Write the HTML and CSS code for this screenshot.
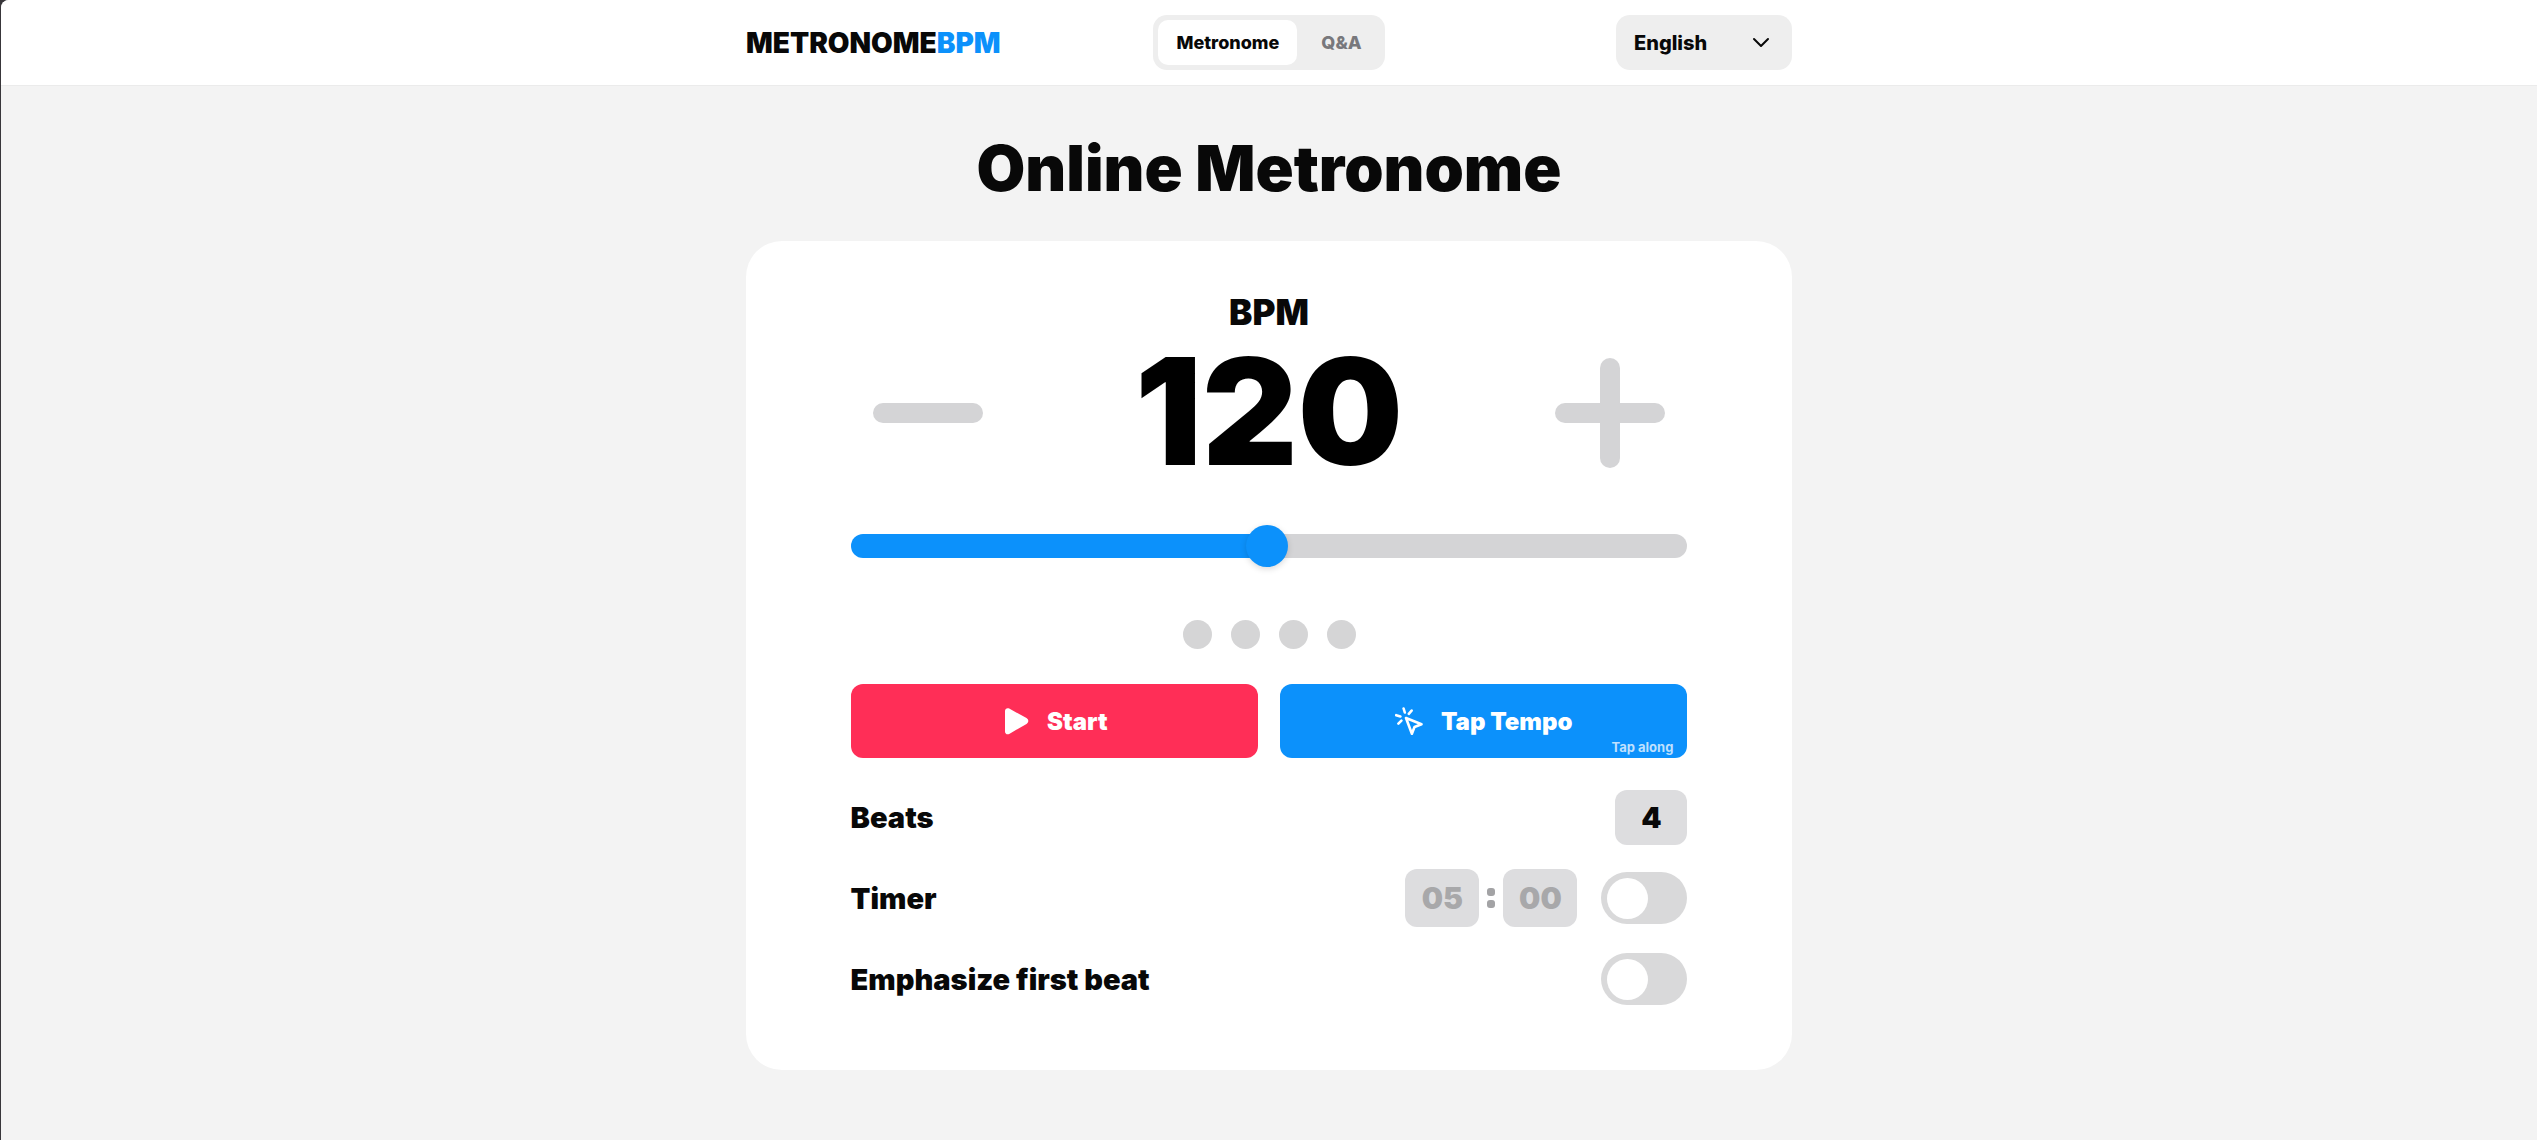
FILE: index.html
```html
<!DOCTYPE html>
<html lang="en">
<head>
<meta charset="utf-8">
<meta name="viewport" content="width=device-width, initial-scale=1">
<title>Online Metronome</title>
<link rel="stylesheet" href="styles.css">
</head>
<body>
<div class="page">
  <header class="header">
    <div class="header-inner">
      <a class="logo" href="#">METRONOME<span class="logo-accent">BPM</span></a>
      <nav class="tabs">
        <a class="tab tab-active" href="#metronome" aria-current="page">Metronome</a>
        <a class="tab" href="#qa">Q&amp;A</a>
      </nav>
      <div class="language">
        <select class="language-select" aria-label="Language"><option>English</option></select>
        <svg class="language-arrow" viewBox="0 0 18 12" aria-hidden="true"><path d="M2 2l7 7 7-7" fill="none" stroke="currentColor" stroke-width="2" stroke-linecap="round" stroke-linejoin="round"/></svg>
      </div>
    </div>
  </header>
  <main class="main">
    <h1 class="title">Online Metronome</h1>
    <section class="card">
      <label class="bpm-label" for="bpm">BPM</label>
      <div class="bpm-row">
        <button class="step" type="button" aria-label="Decrease tempo">
          <svg class="step-icon" viewBox="0 0 110 110"><rect y="45" width="110" height="20" rx="10"/></svg>
        </button>
        <input class="bpm-value" id="bpm" type="text" inputmode="numeric" value="120">
        <button class="step" type="button" aria-label="Increase tempo">
          <svg class="step-icon" viewBox="0 0 110 110"><rect y="45" width="110" height="20" rx="10"/><rect x="45" width="20" height="110" rx="10"/></svg>
        </button>
      </div>
      <input class="slider" type="range" min="1" max="240" value="120" aria-label="Tempo">
      <div class="dots"><span class="dot"></span><span class="dot"></span><span class="dot"></span><span class="dot"></span></div>
      <div class="actions">
        <button class="action action-start" type="button">
          <svg class="action-icon" viewBox="0 0 28 28" aria-hidden="true"><path d="M4 4v20.500c0 2.200 2.200 3.600 4.200 2.400l17.300-10c2.400-1.600 2.400-4.200 0-5.800L8.200 1.600C6.200.4 4 1.800 4 4z" fill="currentColor"/></svg>
          Start
        </button>
        <button class="action action-tap" type="button">
          <svg class="action-icon" viewBox="0 0 28 28" aria-hidden="true"><path d="M11 11l15.500 6.200-7 2.800-2.600 6.800zM8.600 1.500l1.200 4M1.200 8.200l4.200 1.200M16.600 3.600l-2.800 3.200M6.400 13.600l-3 3" fill="none" stroke="currentColor" stroke-width="2.600" stroke-linecap="round" stroke-linejoin="round"/></svg>
          Tap Tempo
          <span class="action-hint">Tap along</span>
        </button>
      </div>
      <div class="settings">
        <div class="setting">
          <label for="beats">Beats</label>
          <input class="field field-beats" id="beats" type="text" inputmode="numeric" value="4">
        </div>
        <div class="setting">
          <label for="timer">Timer</label>
          <div class="setting-controls">
            <div class="timer">
              <input class="field field-time" type="text" value="05" aria-label="Minutes" disabled>
              <span class="colon"></span>
              <input class="field field-time" type="text" value="00" aria-label="Seconds" disabled>
            </div>
            <input class="toggle" id="timer" type="checkbox" role="switch">
          </div>
        </div>
        <div class="setting">
          <label for="emphasize">Emphasize first beat</label>
          <input class="toggle" id="emphasize" type="checkbox" role="switch">
        </div>
      </div>
    </section>
  </main>
</div>
</body>
</html>
```
FILE: styles.css
```css
* { box-sizing: border-box; }

body {
  margin: 0;
  background: #38363a;
  color: #080808;
  font-family: Inter, "Noto Sans", sans-serif;
  font-weight: 900;
}

button, input, select {
  margin: 0;
  border: 0;
  padding: 0;
  color: inherit;
  font: inherit;
}

button { cursor: pointer; }

.page {
  min-height: 100vh;
  margin-left: 1px;
  border-top-left-radius: 8px;
  background: #f3f3f3;
  overflow: hidden;
}

.header {
  border-bottom: 1px solid #ebebeb;
  background: #fff;
}

.header-inner {
  display: grid;
  grid-template-columns: 1fr auto 1fr;
  align-items: center;
  max-width: 1046px;
  margin: 0 auto;
  padding: 15px 0;
}

.logo {
  color: inherit;
  font-size: 28px;
  text-decoration: none;
}

.logo-accent { color: #0c91fb; }

.tabs {
  display: flex;
  gap: 6px;
  padding: 5px;
  border-radius: 14px;
  background: #eee;
}

.tab {
  padding: 0 18px;
  border-radius: 10px;
  color: #78787c;
  font-size: 18px;
  font-weight: 800;
  line-height: 45px;
  text-decoration: none;
}

.tab-active {
  background: #fff;
  color: #080808;
}

.language {
  position: relative;
  justify-self: end;
  width: 176px;
}

.language-select {
  width: 100%;
  height: 55px;
  padding: 0 18px;
  border-radius: 14px;
  background: #eee;
  font-size: 20px;
  font-weight: 800;
  appearance: none;
}

.language-arrow {
  position: absolute;
  top: 22px;
  right: 22px;
  width: 18px;
  height: 12px;
  pointer-events: none;
}

.main {
  max-width: 1046px;
  margin: 0 auto;
  padding: 42px 0 69px;
}

.title {
  margin: 0 0 33px;
  font-size: 63px;
  font-weight: 900;
  line-height: 80px;
  text-align: center;
}

.card {
  display: flex;
  flex-direction: column;
  padding: 46px 10% 62px;
  border-radius: 36px;
  background: #fff;
}

.bpm-label {
  align-self: center;
  font-size: 35px;
  line-height: 50px;
}

.bpm-row {
  display: flex;
  align-items: center;
  justify-content: space-between;
  height: 152px;
  padding: 0 22px;
}

.step {
  width: 110px;
  height: 110px;
  background: none;
}

.step-icon {
  display: block;
  fill: #d4d4d6;
}

.bpm-value {
  width: 360px;
  height: 148px;
  margin-bottom: 4px;
  background: none;
  color: #000;
  font-size: 148px;
  text-align: center;
}

.slider {
  width: 100%;
  height: 24px;
  margin-top: 45px;
  border-radius: 12px;
  background: linear-gradient(to right, #0c91fb 50%, #d4d4d6 50%);
  appearance: none;
}

.slider::-webkit-slider-thumb {
  width: 42px;
  height: 42px;
  border-radius: 50%;
  background: #0c91fb;
  box-shadow: 0 2px 6px rgba(0, 0, 0, .15);
  appearance: none;
}

.dots {
  display: flex;
  justify-content: center;
  gap: 19px;
  margin-top: 62px;
}

.dot {
  width: 29px;
  height: 29px;
  border-radius: 50%;
  background: #d5d5d6;
}

.actions {
  display: grid;
  grid-template-columns: 1fr 1fr;
  gap: 22px;
  margin-top: 35px;
}

.action {
  position: relative;
  display: flex;
  align-items: center;
  justify-content: center;
  gap: 18px;
  height: 74px;
  border-radius: 12px;
  color: #fff;
  font-size: 24px;
}

.action-start { background: #ff2e57; }
.action-tap { background: #0c91fb; }

.action-icon {
  width: 28px;
  height: 28px;
}

.action-hint {
  position: absolute;
  right: 14px;
  bottom: 3px;
  color: #bfe0fe;
  font-size: 13px;
  font-weight: 700;
}

.settings {
  display: flex;
  flex-direction: column;
  gap: 23px;
  margin-top: 30px;
}

.setting {
  display: flex;
  align-items: center;
  justify-content: space-between;
  height: 58px;
  font-size: 29px;
}

.setting-controls {
  display: flex;
  align-items: center;
  gap: 24px;
}

.timer {
  display: flex;
  align-items: center;
  gap: 8px;
}

.field {
  border-radius: 12px;
  background: #dddddf;
  text-align: center;
}

.field-beats {
  width: 72px;
  height: 55px;
}

.field-time {
  width: 74px;
  height: 58px;
  color: #a8a8aa;
  font-size: 30px;
}

.colon {
  display: flex;
  flex-direction: column;
  justify-content: space-between;
  height: 20px;
}

.colon::before,
.colon::after {
  width: 8px;
  height: 8px;
  border-radius: 3px;
  background: #a3a3a5;
  content: "";
}

.toggle {
  display: flex;
  align-items: center;
  width: 86px;
  height: 52px;
  padding: 0 6px;
  border-radius: 26px;
  background: #d9d9da;
  appearance: none;
}

.toggle::before {
  width: 41px;
  height: 41px;
  border-radius: 50%;
  background: #fff;
  content: "";
}

.toggle:checked {
  justify-content: flex-end;
  background: #0c91fb;
}
```
